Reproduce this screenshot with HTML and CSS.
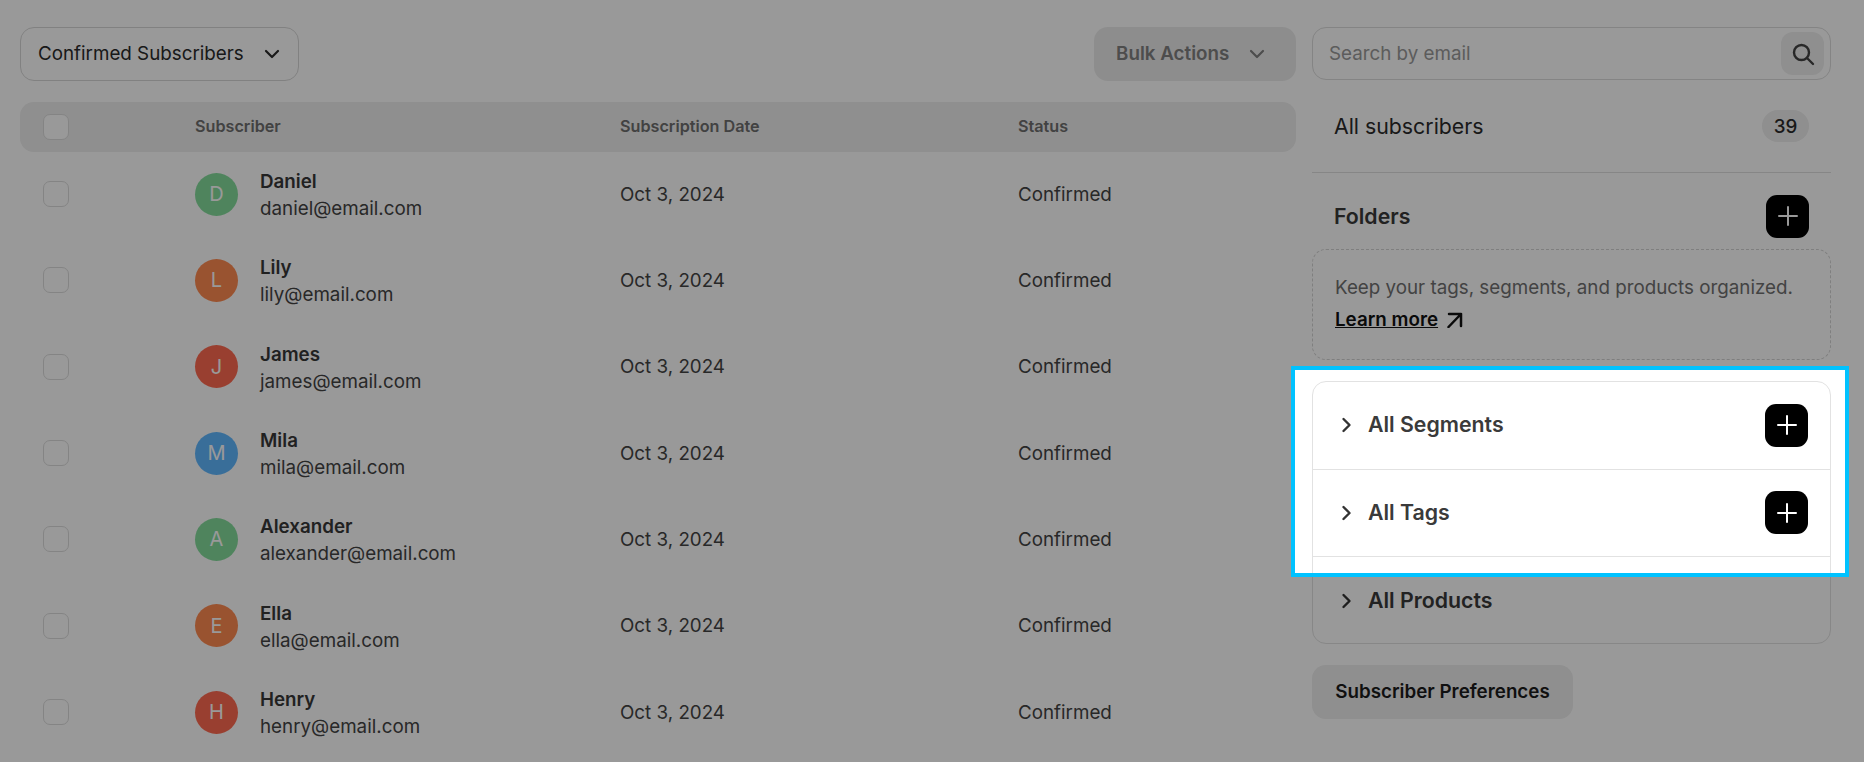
FILE: index.html
```html
<!DOCTYPE html>
<html lang="en">
<head>
    <meta charset="UTF-8">
    <title>Subscribers</title>
    <link rel="stylesheet" href="styles.css">
</head>
<body>
<div class="page">
    <div class="main">
        <div class="toolbar">
            <button class="select">Confirmed Subscribers
                <svg class="chev" viewBox="0 0 16 16"><path d="M2 5l6 6 6-6"/></svg>
            </button>
            <button class="bulk">Bulk Actions
                <svg class="chev" viewBox="0 0 16 16"><path d="M2 5l6 6 6-6"/></svg>
            </button>
        </div>

        <div class="row head">
            <span class="check"></span>
            <span>Subscriber</span>
            <span>Subscription Date</span>
            <span>Status</span>
        </div>

        <div class="rows">
            <div class="row">
                <span class="check"></span>
                <div class="person">
                    <span class="avatar green">D</span>
                    <div class="who"><b>Daniel</b><p>daniel@email.com</p></div>
                </div>
                <span>Oct 3, 2024</span>
                <span>Confirmed</span>
            </div>
            <div class="row">
                <span class="check"></span>
                <div class="person">
                    <span class="avatar orange">L</span>
                    <div class="who"><b>Lily</b><p>lily@email.com</p></div>
                </div>
                <span>Oct 3, 2024</span>
                <span>Confirmed</span>
            </div>
            <div class="row">
                <span class="check"></span>
                <div class="person">
                    <span class="avatar red">J</span>
                    <div class="who"><b>James</b><p>james@email.com</p></div>
                </div>
                <span>Oct 3, 2024</span>
                <span>Confirmed</span>
            </div>
            <div class="row">
                <span class="check"></span>
                <div class="person">
                    <span class="avatar blue">M</span>
                    <div class="who"><b>Mila</b><p>mila@email.com</p></div>
                </div>
                <span>Oct 3, 2024</span>
                <span>Confirmed</span>
            </div>
            <div class="row">
                <span class="check"></span>
                <div class="person">
                    <span class="avatar green">A</span>
                    <div class="who"><b>Alexander</b><p>alexander@email.com</p></div>
                </div>
                <span>Oct 3, 2024</span>
                <span>Confirmed</span>
            </div>
            <div class="row">
                <span class="check"></span>
                <div class="person">
                    <span class="avatar orange">E</span>
                    <div class="who"><b>Ella</b><p>ella@email.com</p></div>
                </div>
                <span>Oct 3, 2024</span>
                <span>Confirmed</span>
            </div>
            <div class="row">
                <span class="check"></span>
                <div class="person">
                    <span class="avatar red">H</span>
                    <div class="who"><b>Henry</b><p>henry@email.com</p></div>
                </div>
                <span>Oct 3, 2024</span>
                <span>Confirmed</span>
            </div>
        </div>
    </div>

    <div class="side">
        <div class="search">
            <span>Search by email</span>
            <span class="search-btn">
                <svg viewBox="0 0 24 24"><circle cx="10.5" cy="10.5" r="7.5"/><path d="M16 16l6 6"/></svg>
            </span>
        </div>

        <div class="all">
            <span>All subscribers</span>
            <span class="badge">39</span>
        </div>

        <div class="folders">
            <b>Folders</b>
            <span class="plus"><svg viewBox="0 0 20 20"><path d="M10 1v18M1 10h18"/></svg></span>
        </div>

        <div class="tip">
            <p>Keep your tags, segments, and products organized.</p>
            <a href="#">Learn more</a>
            <svg class="arrow" viewBox="0 0 16 16"><path d="M2 2h12v12M14 2L1.5 15"/></svg>
        </div>

        <div class="groups">
            <div class="group">
                <svg class="chev-r" viewBox="0 0 12 16"><path d="M2.5 2l6 6-6 6"/></svg>
                <b>All Segments</b>
                <span class="plus"><svg viewBox="0 0 20 20"><path d="M10 1v18M1 10h18"/></svg></span>
            </div>
            <div class="group">
                <svg class="chev-r" viewBox="0 0 12 16"><path d="M2.5 2l6 6-6 6"/></svg>
                <b>All Tags</b>
                <span class="plus"><svg viewBox="0 0 20 20"><path d="M10 1v18M1 10h18"/></svg></span>
            </div>
            <div class="group">
                <svg class="chev-r" viewBox="0 0 12 16"><path d="M2.5 2l6 6-6 6"/></svg>
                <b>All Products</b>
            </div>
        </div>

        <button class="prefs">Subscriber Preferences</button>
    </div>

    <!-- the shadow of this frame is the grey layer over the page -->
    <div class="spot"></div>
</div>
</body>
</html>
```

FILE: styles.css
```css
* {
    margin: 0;
    padding: 0;
    box-sizing: border-box;
}
html, body {
    height: 100%;
    overflow: hidden;
    background: #fff;
}
body {
    font-family: Inter, "Liberation Sans", sans-serif;
    font-size: 18.8px;
    color: #444;
}
button {
    font-family: inherit;
    border: 0;
    background: none;
}
svg {
    fill: none;
    stroke: currentColor;
    stroke-linecap: round;
    stroke-linejoin: round;
    display: block;
}

.page {
    position: relative;
    height: 762px;
    padding: 27px 33px 0 20px;
    display: flex;
    gap: 16px;
}
.main {
    width: 1276px;
}
.side {
    width: 519px;
}

/* toolbar */
.toolbar {
    display: flex;
    justify-content: space-between;
    height: 54px;
    margin-bottom: 21px;
}
.select {
    width: 279px;
    border: 1px solid #d8d8d8;
    border-radius: 14px;
    padding: 0 18px 2px 17px;
    display: flex;
    align-items: center;
    justify-content: space-between;
    font-size: 18.8px;
    color: #2b2b2b;
}
.chev {
    width: 16px;
    height: 16px;
    stroke-width: 2.2;
    margin-top: 2px;
}
.bulk {
    width: 202px;
    border-radius: 14px;
    background: #ececec;
    padding: 0 31px 2px 22px;
    display: flex;
    align-items: center;
    justify-content: space-between;
    font-size: 18.8px;
    font-weight: 600;
    color: #808080;
}
.bulk .chev {
    color: #808080;
}

/* table */
.row {
    display: grid;
    grid-template-columns: 175px 425px 398px 1fr;
    align-items: center;
    height: 86.33px;
}
.head {
    height: 50px;
    background: #eee;
    border-radius: 14px;
    font-size: 16.2px;
    font-weight: 600;
    color: #6e6e6e;
}
.head span {
    margin-top: -2px;
}
.rows {
    margin-top: -1px;
}
.check {
    width: 26px;
    height: 26px;
    margin-left: 23px;
    border: 1px solid #ddd;
    border-radius: 7px;
    background: #fff;
}
.head .check {
    margin-top: 0;
}
.person {
    display: flex;
    align-items: center;
    gap: 22px;
}
.who {
    padding-top: 2px;
}
.person b {
    display: block;
    font-weight: 600;
    line-height: 27px;
    color: #383838;
}
.person p {
    line-height: 27px;
}
.avatar {
    width: 43px;
    height: 43px;
    border-radius: 50%;
    display: flex;
    align-items: center;
    justify-content: center;
    font-size: 20px;
    color: #fff;
}
.green { background: #84dc9c; }
.orange { background: #ff8a50; }
.red { background: #ff6a50; }
.blue { background: #60b8ff; }

/* sidebar */
.search {
    height: 53px;
    border: 1px solid #dcdcdc;
    border-radius: 14px;
    padding: 0 6px 0 16px;
    display: flex;
    align-items: center;
    justify-content: space-between;
    color: #999;
}
.search-btn {
    width: 43px;
    height: 43px;
    border-radius: 12px;
    background: #eee;
    display: flex;
    align-items: center;
    justify-content: center;
    color: #444;
}
.search-btn svg {
    width: 24px;
    height: 24px;
    stroke-width: 2.4;
}
.all {
    height: 93px;
    padding: 0 22px;
    border-bottom: 1px solid #e0e0e0;
    display: flex;
    align-items: center;
    justify-content: space-between;
    font-size: 21.3px;
    color: #2b2b2b;
}
.badge {
    width: 47px;
    height: 32px;
    border-radius: 16px;
    background: #eee;
    display: flex;
    align-items: center;
    justify-content: center;
    font-size: 18.8px;
    font-weight: 500;
}
.folders {
    height: 76px;
    padding: 10px 22px 0;
    display: flex;
    align-items: center;
    justify-content: space-between;
}
.folders b {
    font-size: 21.3px;
    font-weight: 600;
    color: #3a3a3a;
}
.plus {
    width: 43px;
    height: 43px;
    border-radius: 11px;
    background: #000;
    color: #fff;
    display: flex;
    align-items: center;
    justify-content: center;
}
.plus svg {
    width: 20px;
    height: 20px;
    stroke-width: 2;
}
.tip {
    height: 111px;
    border: 1px dashed #d4d4d4;
    border-radius: 14px;
    padding: 24px 22px 0;
    color: #707070;
}
.tip p {
    margin-bottom: 5px;
    line-height: 27px;
}
.tip a {
    color: #111;
    font-weight: 600;
    line-height: 27px;
}
.arrow {
    display: inline-block;
    width: 16px;
    height: 16px;
    margin-left: 4px;
    color: #111;
    stroke-width: 2.5;
    vertical-align: -2px;
}
.groups {
    margin-top: 21px;
    height: 263px;
    border: 1px solid #e2e2e2;
    border-radius: 14px;
}
.group {
    height: 87.5px;
    padding: 0 22px 0 28px;
    display: flex;
    align-items: center;
    border-bottom: 1px solid #e2e2e2;
}
.group:last-child {
    border-bottom: 0;
}
.group b {
    flex: 1;
    margin-left: 15px;
    padding-bottom: 2px;
    font-size: 21.3px;
    font-weight: 600;
    color: #3a3a3a;
}
.chev-r {
    width: 12px;
    height: 16px;
    color: #333;
    stroke-width: 2.4;
}
.prefs {
    display: block;
    margin-top: 21px;
    width: 261px;
    height: 54px;
    padding-bottom: 2px;
    border-radius: 14px;
    background: #eee;
    font-size: 18.8px;
    font-weight: 600;
    color: #1c1c1c;
}

/* highlight */
.spot {
    position: absolute;
    left: 1291px;
    top: 366px;
    width: 558px;
    height: 211px;
    border: 4px solid #00c2ff;
    box-shadow: 0 0 0 2000px rgba(0, 0, 0, .4);
}
```
